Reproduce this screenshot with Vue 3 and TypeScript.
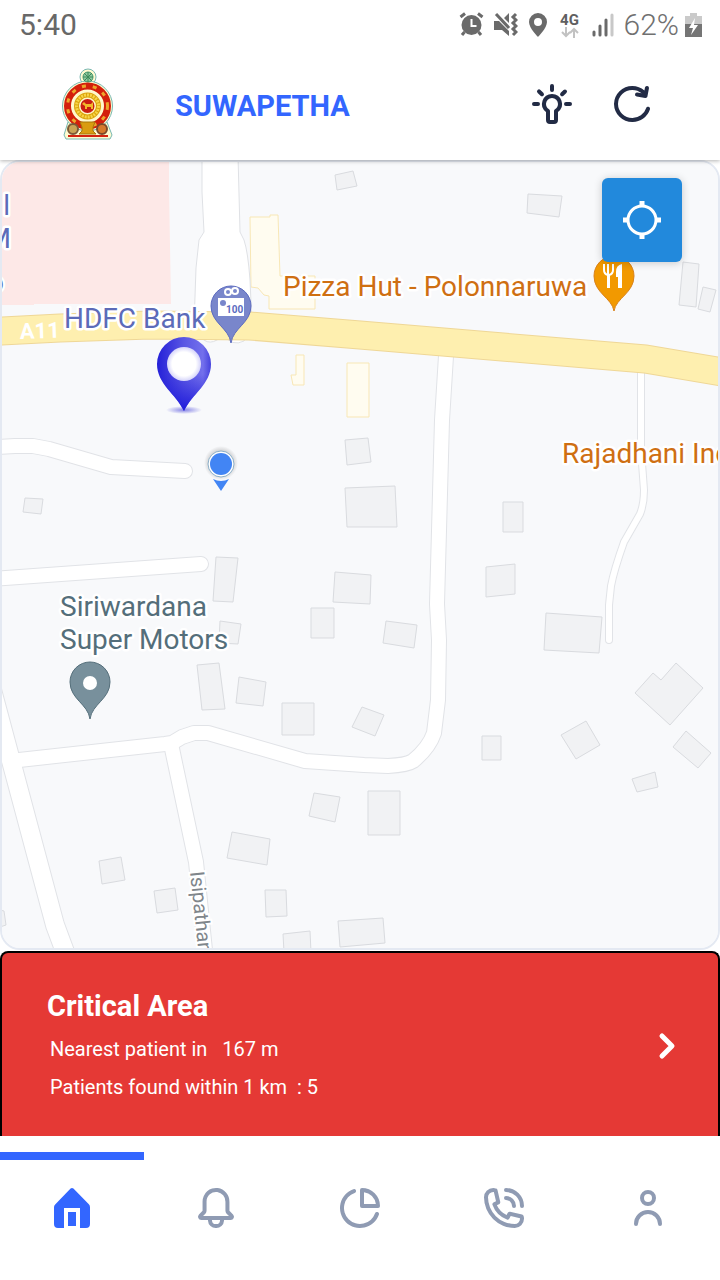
<script setup lang="ts">
import { ref } from 'vue'

interface Tab {
  id: string
  label: string
  paths: string[]
}

const active = ref('home')

const tabs: Tab[] = [
  {
    id: 'home',
    label: 'Home',
    paths: [
      'M20.42 10.18L12.71 2.3a1 1 0 0 0-1.42 0l-7.71 7.89A2 2 0 0 0 3 11.62V20a2 2 0 0 0 2 2h3V12h8v10h3a2 2 0 0 0 2-2v-8.38a2.07 2.07 0 0 0-.58-1.44z',
      'M10 14h4v7h-4z',
    ],
  },
  {
    id: 'alerts',
    label: 'Alerts',
    paths: [
      'M20.52 15.21l-1.8-1.81V8.94a6.86 6.86 0 0 0-5.82-6.88 6.74 6.74 0 0 0-7.62 6.67v4.67l-1.8 1.81A1.64 1.64 0 0 0 4.64 18H8v.34A3.84 3.84 0 0 0 12 22a3.84 3.84 0 0 0 4-3.66V18h3.36a1.64 1.64 0 0 0 1.16-2.79zM14 18.34A1.88 1.88 0 0 1 12 20a1.88 1.88 0 0 1-2-1.66V18h4zM5.51 16l1.18-1.18a2 2 0 0 0 .59-1.42V8.73A4.73 4.73 0 0 1 8.9 5.17 4.67 4.67 0 0 1 12.64 4a4.86 4.86 0 0 1 4.08 4.9v4.5a2 2 0 0 0 .58 1.42L18.49 16z',
    ],
  },
  {
    id: 'stats',
    label: 'Statistics',
    paths: [
      'M13 2a1 1 0 0 0-1 1v8a1 1 0 0 0 1 1h8a1 1 0 0 0 1-1 9 9 0 0 0-9-9zm1 8V4.07A7 7 0 0 1 19.93 10z',
      'M20.82 14.06a1 1 0 0 0-1.28.61A8 8 0 1 1 9.33 4.46a1 1 0 0 0-.66-1.89 10 10 0 1 0 12.76 12.76 1 1 0 0 0-.61-1.27z',
    ],
  },
  {
    id: 'calls',
    label: 'Emergency calls',
    paths: [
      'M13 8a3 3 0 0 1 3 3 1 1 0 0 0 2 0 5 5 0 0 0-5-5 1 1 0 0 0 0 2z',
      'M13 4a7 7 0 0 1 7 7 1 1 0 0 0 2 0 9 9 0 0 0-9-9 1 1 0 0 0 0 2z',
      'M21.75 15.91a1 1 0 0 0-.72-.65l-6-1.37a1 1 0 0 0-.92.26c-.14.13-.15.14-.8 1.38a9.91 9.91 0 0 1-4.87-4.89C9.71 10 9.72 10 9.85 9.85a1 1 0 0 0 .26-.92L8.74 3a1 1 0 0 0-.65-.72 3.79 3.79 0 0 0-.72-.18A3.94 3.94 0 0 0 6.6 2 4.6 4.6 0 0 0 2 6.6 15.42 15.42 0 0 0 17.4 22a4.6 4.6 0 0 0 4.6-4.6 4.77 4.77 0 0 0-.06-.76 4.34 4.34 0 0 0-.19-.73zM17.4 20A13.41 13.41 0 0 1 4 6.6 2.61 2.61 0 0 1 6.6 4h.33L8 8.64l-.54.28c-.86.45-1.54.81-1.18 1.59a11.85 11.85 0 0 0 7.18 7.21c.84.34 1.17-.29 1.62-1.16l.29-.55L20 17.07v.33a2.61 2.61 0 0 1-2.6 2.6z',
    ],
  },
  {
    id: 'profile',
    label: 'Profile',
    paths: [
      'M12 11a4 4 0 1 0-4-4 4 4 0 0 0 4 4zm0-6a2 2 0 1 1-2 2 2 2 0 0 1 2-2z',
      'M12 13a7 7 0 0 0-7 7 1 1 0 0 0 2 0 5 5 0 0 1 10 0 1 1 0 0 0 2 0 7 7 0 0 0-7-7z',
    ],
  },
]

const buildings: string[] = [
  '335,175 353,171 357,186 337,190',
  '528,194 562,196 559,217 527,213',
  '683,262 699,264 696,307 679,305',
  '703,287 716,290 710,312 698,309',
  '25,498 43,499 41,514 23,512',
  '216,557 238,558 233,602 213,601',
  '220,621 241,624 238,644 219,643',
  '345,440 368,438 371,462 347,465',
  '345,488 395,486 397,527 347,527',
  '335,572 371,575 370,604 333,602',
  '311,608 334,608 334,638 311,638',
  '197,665 219,663 225,709 202,710',
  '239,677 266,682 263,706 236,703',
  '503,502 523,502 523,532 503,532',
  '486,567 515,564 515,594 486,597',
  '386,621 417,625 414,648 383,643',
  '546,613 602,617 599,653 544,650',
  '635,693 653,673 661,680 676,663 703,688 670,725',
  '282,703 314,703 314,735 282,735',
  '362,707 384,715 375,736 352,727',
  '314,793 340,797 335,822 309,816',
  '232,832 270,839 267,865 227,858',
  '99,861 121,857 125,880 102,884',
  '154,891 175,888 178,910 157,913',
  '265,890 286,890 287,916 266,917',
  '283,934 310,931 311,952 284,952',
  '338,921 383,918 385,943 340,947',
  '0,910 4,911 6,925 0,927',
  '482,736 501,736 501,760 482,760',
  '368,791 400,791 400,835 368,835',
  '561,735 586,721 600,745 576,759',
  '686,731 711,753 698,768 673,747',
  '632,779 655,772 658,787 637,792',
]

const shops: string[] = [
  '250,217 270,217 270,215 278,215 280,276 315,276 315,309 269,309 269,296 264,295 258,288 251,287',
  '296,355 304,355 304,385 293,385 291,375 296,375',
  '347,363 369,363 369,417 347,417',
]

interface Road {
  d: string
  w: number
}

const roads: Road[] = [
  { d: 'M446 356L442 420L437 604L439 640L438 700L434 733Q429 748 413 761Q407 765 388 766L364 765L305 761L208 733H194L182 737L172 743L165 744L10 761', w: 14 },
  { d: 'M171 744L196 862L206 960', w: 14 },
  { d: 'M-16 660L10 757L55 925L68 960', w: 18 },
  { d: 'M-5 447L15 446H33L49 449L111 467L185 471', w: 14 },
  { d: 'M-10 579L201 564', w: 14 },
  { d: 'M641 372V450L644 490Q644 504 640 514L624 542Q614 570 611 586L609 605V640', w: 6 },
]
</script>

<template>
  <div class="app">
    <div class="status">
      <span class="clock">5:40</span>
      <div class="status-icons">
        <svg width="25" height="26" viewBox="0 0 25 26" fill="none" stroke="#6a6a6a">
          <circle cx="12.500" cy="13" r="10" fill="#6a6a6a" stroke="none" />
          <path d="M1.500 5L6 1.500M23.500 5L19 1.500" stroke-width="3" />
          <path d="M5.500 20L3 23M19.500 20L22 23" stroke-width="3" />
          <path d="M12.500 7v7h5" stroke="#fff" stroke-width="2" />
        </svg>
        <svg width="24" height="26" viewBox="0 0 24 26" fill="#6a6a6a">
          <path d="M0 9h5l10 10v5l-7-6H0zM15 1v10l-5-5z" />
          <path d="M2 2l13 14" stroke="#6a6a6a" stroke-width="3" />
          <path d="M22 2l-3 3 3 3-3 3 3 3-3 3 3 3-3 3" fill="none" stroke="#6a6a6a" stroke-width="3" />
        </svg>
        <svg width="20" height="26" viewBox="0 0 20 26" fill="#6a6a6a">
          <path fill-rule="evenodd" d="M10 1a9 9 0 0 1 9 9c0 6-9 15-9 15S1 16 1 10a9 9 0 0 1 9-9zm0 5a4 4 0 1 0 0 8 4 4 0 0 0 0-8z" />
        </svg>
        <span class="network">
          <span>4G</span>
          <svg width="18" height="11" viewBox="0 0 18 11" fill="none" stroke="#c2c2c2" stroke-width="2">
            <path d="M5 0v9M1 5l4 4 4-4M13 11V2M9 6l4-4 4 4" />
          </svg>
        </span>
        <svg width="22" height="26" viewBox="0 0 22 26" fill="none" stroke-width="3" stroke-linecap="round">
          <path d="M2 20v3M8 14v9M14 8v15" stroke="#6a6a6a" />
          <path d="M20 3v20" stroke="#c8c8c8" />
        </svg>
        <span class="percent">62%</span>
        <svg width="17" height="26" viewBox="0 0 17 26">
          <path d="M5 1h7v3h5v8H0V4h5z" fill="#cacaca" />
          <path d="M0 12h17v13H0z" fill="#757575" />
          <path d="M10 6L4 16h4l-2 7 7-10H9z" fill="#fff" />
        </svg>
      </div>
    </div>

    <header class="header">
      <svg class="emblem" viewBox="58 66 60 74" role="img" aria-label="National emblem">
        <g fill="#fffbd0" stroke="#79b8b3">
          <circle cx="88" cy="76" r="8" />
          <path d="M68 121h39l5 13-2 4H66l-2-4z" />
          <circle cx="87.500" cy="105" r="25" />
        </g>
        <circle cx="88" cy="76" r="5" fill="#8fc9a0" stroke="#43936b" stroke-width="1" />
        <path d="M88 71v10M83 76h10M84 72l8 8M92 72l-8 8" stroke="#3c8a58" />
        <circle cx="87.500" cy="105" r="20" fill="none" stroke="#d31f0c" stroke-width="7" />
        <circle cx="87.500" cy="105" r="20" fill="none" stroke="#eda62b" stroke-width="3" stroke-dasharray="4 7" />
        <circle cx="87.500" cy="105" r="15" fill="#fff6c8" />
        <circle cx="87.500" cy="105" r="11" fill="none" stroke="#dba30b" stroke-width="5" />
        <circle cx="87.500" cy="105" r="11" fill="none" stroke="#f6d548" stroke-width="3" stroke-dasharray="2 1" />
        <circle cx="87.500" cy="105" r="7" fill="#c91d12" />
        <path d="M82 103l2-2 2 2h5l2-2v7h-2v-2h-4v2h-2v-3z" fill="#f2b82a" />
        <path d="M80 121h15l-2 5v4l3 3H79l3-3v-4z" fill="#d99c10" stroke="#a77609" />
        <circle cx="73" cy="128" r="5" fill="#c9a455" stroke="#7b5a39" stroke-width="2" />
        <circle cx="102" cy="128" r="5" fill="#d67a2b" stroke="#7b4a29" stroke-width="2" />
        <path d="M68 134h40v2H68z" fill="#d3220f" />
      </svg>
      <h1>SUWAPETHA</h1>
      <button class="icon-button" type="button" aria-label="Toggle theme">
        <svg viewBox="0 0 24 24" fill="currentColor">
          <path d="M12 7a5 5 0 0 0-3 9v4a2 2 0 0 0 2 2h2a2 2 0 0 0 2-2v-4a5 5 0 0 0-3-9zm1.500 7.590a1 1 0 0 0-.5.870V20h-2v-4.540a1 1 0 0 0-.5-.870A3 3 0 0 1 9 12a3 3 0 0 1 6 0 3 3 0 0 1-1.500 2.590z" />
          <path d="M12 6a1 1 0 0 0 1-1V3a1 1 0 0 0-2 0v2a1 1 0 0 0 1 1zM21 11h-2a1 1 0 0 0 0 2h2a1 1 0 0 0 0-2zM5 11H3a1 1 0 0 0 0 2h2a1 1 0 0 0 0-2z" />
          <path d="M7.660 6.420L6.220 5a1 1 0 0 0-1.390 1.470l1.440 1.390a1 1 0 0 0 .730.280 1 1 0 0 0 .720-.310 1 1 0 0 0-.060-1.410zM19.190 5.050a1 1 0 0 0-1.410 0l-1.440 1.370a1 1 0 0 0 0 1.410 1 1 0 0 0 .720.310 1 1 0 0 0 .690-.280l1.440-1.390a1 1 0 0 0 0-1.420z" />
        </svg>
      </button>
      <button class="icon-button" type="button" aria-label="Refresh">
        <svg viewBox="0 0 24 24" fill="currentColor">
          <path d="M20.300 13.430a1 1 0 0 0-1.250.650A7.140 7.140 0 0 1 12.180 19 7.100 7.100 0 0 1 5 12a7.100 7.100 0 0 1 7.180-7 7.260 7.260 0 0 1 4.650 1.670l-2.170-.360a1 1 0 0 0-1.150.830 1 1 0 0 0 .830 1.150l4.240.700h.170a1 1 0 0 0 .340-.060.330.330 0 0 0 .100-.060.780.780 0 0 0 .200-.110l.090-.110c0-.050.090-.090.130-.150s0-.100.050-.140a1.340 1.340 0 0 0 .070-.180l.750-4a1 1 0 0 0-2-.380l-.270 1.450A9.210 9.210 0 0 0 12.180 3 9.100 9.100 0 0 0 3 12a9.100 9.100 0 0 0 9.180 9A9.120 9.120 0 0 0 21 14.680a1 1 0 0 0-.700-1.250z" />
        </svg>
      </button>
    </header>

    <main class="map">
      <svg class="map-canvas" viewBox="2 162 716 786" preserveAspectRatio="xMidYMid slice" role="img" aria-label="Map">
        <defs>
          <linearGradient id="pinShade" x1="0" y1="0" x2="1" y2="0">
            <stop offset="0" stop-color="#2420d8" />
            <stop offset="0.500" stop-color="#5a57e4" />
            <stop offset="0.850" stop-color="#7370ec" />
            <stop offset="1" stop-color="#4542dd" />
          </linearGradient>
          <linearGradient id="pinDepth" x1="0" y1="0" x2="0" y2="1">
            <stop offset="0.500" stop-color="#2420d8" stop-opacity="0" />
            <stop offset="1" stop-color="#1d18dc" />
          </linearGradient>
          <radialGradient id="pinHole">
            <stop offset="0.700" stop-color="#fff" />
            <stop offset="1" stop-color="#d5d4fa" />
          </radialGradient>
          <radialGradient id="pinShadow">
            <stop offset="0" stop-color="#3a36d8" stop-opacity="0.600" />
            <stop offset="1" stop-color="#3a36d8" stop-opacity="0" />
          </radialGradient>
          <radialGradient id="dotShadow">
            <stop offset="0.700" stop-color="#777" stop-opacity="0.300" />
            <stop offset="1" stop-color="#777" stop-opacity="0" />
          </radialGradient>
        </defs>

        <rect x="-300" y="0" width="1400" height="1200" fill="#f8f9fb" />
        <path d="M0 160H169V188L170 245L171 304L34 304V305H0z" fill="#fde8e7" />
        <polygon v-for="p in buildings" :key="p" :points="p" fill="#f1f2f4" stroke="#d9dbdf" />
        <polygon v-for="p in shops" :key="p" :points="p" fill="#fffcf0" stroke="#f8e7b5" />

        <g fill="none" stroke="#e1e3e7" stroke-linejoin="round" stroke-linecap="round">
          <path v-for="r in roads" :key="r.d" :d="r.d" :stroke-width="r.w + 2" />
        </g>
        <path d="M202 155V192L204 232L199 240L196 268L194 325Q203 348 217 340L224 335Q232 347 244 341L252 325L250 280Q248 252 244 240L240 232L238 155z" fill="#fff" stroke="#dfe1e5" />
        <g fill="none" stroke="#fff" stroke-linejoin="round" stroke-linecap="round">
          <path v-for="r in roads" :key="r.d" :d="r.d" :stroke-width="r.w" />
        </g>

        <path d="M-20 332L60 328L150 325L250 326L360 335L645 359L740 375" fill="none" stroke="#efd797" stroke-width="29" />
        <path d="M-20 332L60 328L150 325L250 326L360 335L645 359L740 375" fill="none" stroke="#feefaf" stroke-width="27" />

        <text x="20" y="339" class="route" transform="rotate(-2 20 339)">A11</text>

        <g class="label violet">
          <text x="10" y="215" text-anchor="end">l</text>
          <text x="11" y="248" text-anchor="end">M</text>
          <text x="4" y="292" text-anchor="end">o</text>
          <text x="64" y="328">HDFC Bank</text>
        </g>
        <g class="label orange">
          <text x="283" y="296">Pizza Hut - Polonnaruwa</text>
          <text x="562" y="463">Rajadhani Indian</text>
        </g>
        <g class="label slate">
          <text x="60" y="616">Siriwardana</text>
          <text x="60" y="649">Super Motors</text>
        </g>
        <text x="190" y="872" class="street" transform="rotate(84 190 872)">Isipathana Road</text>

        <path d="M231 343C229 328 211 323 211 306a20 20 0 0 1 40 0c0 17-18 22-20 37z" fill="#7986cb" stroke="#5c6bc0" />
        <g fill="none" stroke="#fff" stroke-width="2">
          <circle cx="228" cy="292" r="3" />
          <circle cx="235" cy="291" r="3" />
        </g>
        <rect x="218" y="298" width="26" height="18" fill="#fff" />
        <circle cx="223" cy="303" r="3" fill="#7986cb" />
        <text x="226" y="313" class="note">100</text>

        <path d="M614 311C612 298 594 293 594 276a20 20 0 0 1 40 0c0 17-18 22-20 35z" fill="#f29900" stroke="#d9821b" />
        <path d="M604 264v6q0 4 4 5v13M608 264v10M613 264v6q0 4-4 5v13" fill="none" stroke="#fff" stroke-width="2" />
        <path d="M622 264v24h-4v-11h-2v-5q0-7 6-8z" fill="#fff" />

        <path d="M90 719C88 704 70 699 70 682a20 20 0 0 1 40 0c0 17-18 22-20 37z" fill="#78909c" stroke="#546e7a" />
        <circle cx="90" cy="683" r="7" fill="#fff" />

        <ellipse cx="184" cy="410" rx="18" ry="4" fill="url(#pinShadow)" />
        <path d="M184 411C176 394 157 384 157 364a27 27 0 0 1 54 0c0 20-19 30-27 47z" fill="url(#pinShade)" />
        <path d="M184 411C176 394 157 384 157 364a27 27 0 0 1 54 0c0 20-19 30-27 47z" fill="url(#pinDepth)" />
        <circle cx="184" cy="364" r="17" fill="url(#pinHole)" />

        <circle cx="221" cy="463" r="17" fill="url(#dotShadow)" />
        <circle cx="221" cy="464" r="13" fill="#fff" stroke="#8db0c9" />
        <circle cx="221" cy="464" r="11" fill="#4285f4" />
        <path d="M213 479q8 4 16 0l-8 12z" fill="#4285f4" />
      </svg>

      <button class="locate" type="button" aria-label="My location">
        <svg viewBox="0 0 40 40" fill="none" stroke="#fff">
          <circle cx="20" cy="20" r="14" stroke-width="3" />
          <path d="M20 1v6M20 33v6M1 20h6M33 20h6" stroke-width="5" />
        </svg>
      </button>
    </main>

    <section class="alert">
      <div class="alert-text">
        <h2>Critical Area</h2>
        <p>Nearest patient in&nbsp;&nbsp; 167 m</p>
        <p>Patients found within 1 km&nbsp; : 5</p>
      </div>
      <button class="more" type="button" aria-label="Show details">
        <svg viewBox="0 0 24 32" fill="none" stroke="#fff" stroke-width="5" stroke-linecap="round" stroke-linejoin="round">
          <path d="M7 6l10 10L7 26" />
        </svg>
      </button>
    </section>

    <nav class="tabs">
      <button
        v-for="tab in tabs"
        :key="tab.id"
        type="button"
        class="tab"
        :class="{ active: active === tab.id }"
        :aria-label="tab.label"
        @click="active = tab.id"
      >
        <svg viewBox="0 0 24 24" fill="currentColor">
          <path v-for="p in tab.paths" :key="p" :d="p" />
        </svg>
      </button>
    </nav>
  </div>
</template>

<style scoped>
.app {
  display: flex;
  flex-direction: column;
  min-height: 100vh;
  background: #fff;
  font-family: Roboto, 'Noto Sans', sans-serif;
}
button {
  padding: 0;
  border: 0;
  background: none;
  cursor: pointer;
}
svg {
  display: block;
}
.status {
  position: relative;
  z-index: 2;
  display: flex;
  align-items: center;
  justify-content: space-between;
  height: 50px;
  padding: 0 18px 0 19px;
  background: #fff;
  color: #707070;
  font-size: 30px;
  line-height: 50px;
}
.clock {
  color: #686868;
}
.status-icons {
  display: flex;
  align-items: center;
  gap: 10px;
}
.network {
  display: flex;
  flex-direction: column;
  align-items: center;
  width: 24px;
  color: #606060;
  font-size: 15px;
  font-weight: 700;
  line-height: 14px;
}
.percent {
  margin-right: -4px;
  font-weight: 300;
}
.header {
  position: relative;
  z-index: 1;
  display: flex;
  align-items: center;
  gap: 32px;
  height: 110px;
  padding: 0 64px 2px 58px;
  box-sizing: border-box;
  background: #fff;
  box-shadow: 0 1px 4px rgba(0, 0, 0, 0.3);
}
.emblem {
  width: 60px;
  height: 74px;
  flex: none;
}
.header h1 {
  flex: 1;
  margin: 0 0 0 25px;
  padding-top: 4px;
  color: #3366ff;
  font-size: 29px;
  font-weight: 700;
  line-height: 36px;
}
.icon-button {
  width: 48px;
  height: 48px;
  color: #222b45;
}
.map {
  position: relative;
  flex: 1;
  min-height: 400px;
  overflow: hidden;
  border: 2px solid #e4e9f2;
  border-radius: 20px;
  background: #f8f9fb;
}
.map-canvas {
  position: absolute;
  inset: 0;
  width: 100%;
  height: 100%;
}
.label {
  font-size: 28px;
  stroke: #fff;
  stroke-width: 5px;
  stroke-linejoin: round;
  paint-order: stroke;
}
.violet {
  fill: #5c6bb8;
}
.orange {
  fill: #cf6f12;
}
.slate {
  fill: #546e7a;
}
.route {
  fill: #fff;
  font-size: 22px;
  font-weight: 700;
}
.street {
  fill: #80868b;
  font-size: 20px;
  stroke: #fff;
  stroke-width: 4px;
  paint-order: stroke;
}
.note {
  fill: #5c6bc0;
  font-size: 10px;
  font-weight: 700;
}
.locate {
  position: absolute;
  top: 16px;
  right: 36px;
  display: grid;
  place-items: center;
  width: 80px;
  height: 84px;
  border-radius: 6px;
  background: #2289dc;
  box-shadow: 0 1px 8px rgba(0, 0, 0, 0.2);
}
.locate svg {
  width: 40px;
  height: 40px;
}
.alert {
  display: flex;
  align-items: center;
  justify-content: space-between;
  margin-top: 1px;
  padding: 33px 39px 30px 45px;
  border: 2px solid #000;
  border-bottom: 0;
  border-radius: 8px 8px 0 0;
  background: #e53935;
  color: #fff;
}
.alert h2 {
  margin: 0 0 4px;
  font-size: 29px;
  font-weight: 700;
  line-height: 40px;
}
.alert p {
  margin: 0 0 0 3px;
  font-size: 20px;
  line-height: 38px;
}
.more {
  width: 24px;
  height: 32px;
}
.tabs {
  display: flex;
  height: 128px;
  padding-top: 16px;
  background: #fff;
}
.tab {
  display: flex;
  flex: 1;
  align-items: flex-start;
  justify-content: center;
  padding-top: 24px;
  border-top: 8px solid transparent;
  color: #8f9bb3;
}
.tab svg {
  width: 48px;
  height: 48px;
}
.tab.active {
  border-top-color: #3366ff;
  color: #3366ff;
}
</style>

<style>
body {
  margin: 0;
}
</style>
